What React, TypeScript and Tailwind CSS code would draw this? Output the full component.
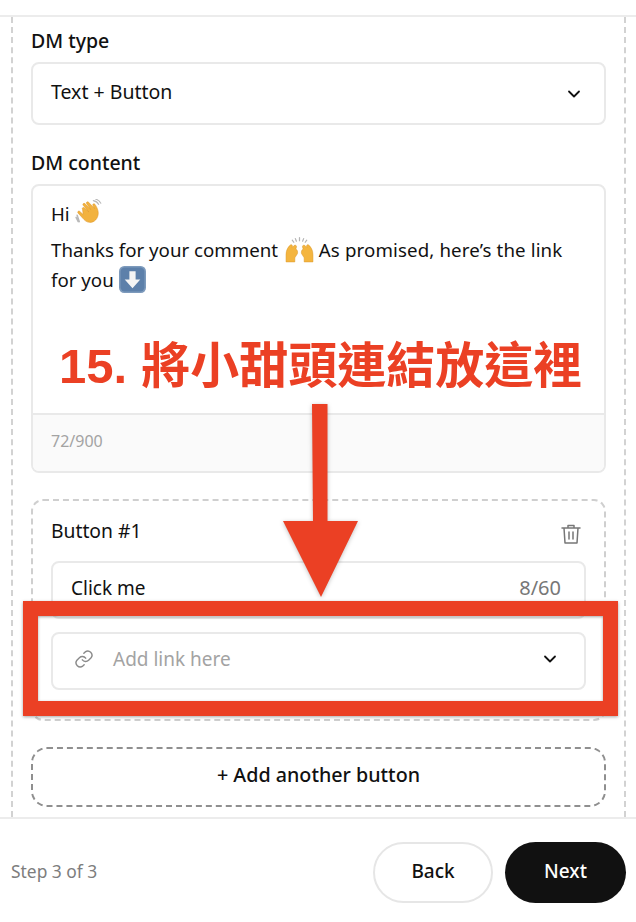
const Wave = () => (
  <svg viewBox="0 0 26 26" className="inline-block w-[28px] h-[28px] align-[-6px]">
    <path d="M2 15 4 21M1 17l2 4" stroke="#b9b9b9" strokeWidth="1.4" fill="none" strokeLinecap="round" />
    <path d="M17 1.5c2 .3 4 1.6 5 3.5M19 0c2 .5 4 1.8 5 4" stroke="#b9b9b9" strokeWidth="1" fill="none" strokeLinecap="round" />
    <path d="M7 9.500c-.8-1 .6-2.200 1.600-1.300l4.200 3.800L7.600 5.800c-.9-1.100.7-2.400 1.700-1.400l5.300 5.200-3.800-5.300c-.8-1.200.8-2.300 1.800-1.300l5.500 5.800-1.500-2.900c-.5-1.300 1.100-2 2-.9 1.500 2.200 3.100 5.200 3 8.200-.1 4.800-3.600 9-8.300 8.500-2.800-.3-4.500-2-6.200-4l-4.300-4.700c-.9-1.100.6-2.400 1.600-1.500l3.200 2.900z" fill="#f2b23e" stroke="#dd9526" strokeWidth=".5" />
  </svg>
);
const Hands = () => (
  <svg viewBox="0 0 28 26" className="inline-block w-[29px] h-[27px] align-[-6px] ml-[2px]">
    <path d="M10 2.500 11 5M14 1.500V4.500M18 2.500 17 5M7 4l1.500 2M21 4l-1.500 2" stroke="#b5b5b5" strokeWidth="1.200" strokeLinecap="round" />
    <path d="M1 25V18C1 14 3 10 5.500 8.500 7 8 7.500 9.500 7 11L9 9c1.500-.5 2.500.5 2 2l-.5 1.500C12 13.500 12.500 15 12 17L9.500 21V25z" fill="#f4b53f" stroke="#dc9a2c" strokeWidth=".5" />
    <path d="M27 25V18C27 14 25 10 22.500 8.500 21 8 20.500 9.500 21 11L19 9c-1.500-.5-2.500.5-2 2l.5 1.500C16 13.500 15.500 15 16 17L18.500 21V25z" fill="#f4b53f" stroke="#dc9a2c" strokeWidth=".5" />
  </svg>
);
const DownBox = () => (
  <svg viewBox="0 0 26 26" className="inline-block w-[27px] h-[27px] align-[-6px]">
    <rect x="0" y="0" width="26" height="26" rx="5" fill="#7d9abc" />
    <rect x="1.500" y="1.500" width="23" height="23" rx="4" fill="#5d80aa" />
    <path d="M10 5h6v8h4.500L13 21.500 5.500 13H10z" fill="#f4f4f4" />
  </svg>
);
const Chevron = () => (
  <svg viewBox="0 0 14 14" className="w-[14px] h-[14px] shrink-0" fill="none" stroke="#111" strokeWidth="1.800" strokeLinecap="round" strokeLinejoin="round">
    <path d="M2 4.500 7 9.500l5-5" />
  </svg>
);

export default function App() {
  return (
    <div className="relative w-[636px] h-[922px] overflow-hidden bg-white flex flex-col text-[#111] font-['Noto_Sans','Open_Sans',sans-serif]">
      <div className="h-[17px] shrink-0 border-b-2 border-[#ececec]" />
      <div className="ml-[11px] w-[615px] h-[800px] shrink-0 border-x-2 border-dashed border-[#d2d2d2] pl-[18px] pr-[18px] pt-[11px] overflow-hidden">
        <div className="text-[19.500px] leading-[26px] font-medium">DM type</div>
        <div className="mt-[8px] h-[63px] rounded-lg border-2 border-[#e9e9e9] flex items-center justify-between pl-[18px] pr-[23px] text-[19.500px]">
          <span className="mb-[3px]">Text + Button</span>
          <Chevron />
        </div>
        <div className="mt-[25px] text-[19.500px] leading-[26px] font-medium">DM content</div>
        <div className="mt-[8px] h-[289px] rounded-lg border-2 border-[#e9e9e9] flex flex-col overflow-hidden">
          <div className="h-[229px] shrink-0 pl-[18px] pr-[18px] pt-[13px] text-[18.700px] leading-[30px] border-b-2 border-[#e9e9e9]">
            <div className="mb-[6px]">Hi <Wave /></div>
            <div>Thanks for your comment <Hands /> <span className="tracking-[0.12px]">As promised, here’s the link</span> for you <DownBox /></div>
          </div>
          <div className="flex-1 bg-[#fafafa] pl-[18px] pt-[13px] text-[16px] leading-[26px] text-[#a3a3a3]">72/900</div>
        </div>
        <div className="mt-[26px] h-[222px] rounded-xl border-2 border-dashed border-[#cfcfcf] px-[18px]">
          <div className="h-[60px] flex items-center justify-between pr-[3px]">
            <span className="text-[19.300px]">Button #1</span>
            <svg viewBox="0 0 24 24" className="w-[24px] h-[24px] mt-[5px]" fill="none" stroke="#777" strokeWidth="1.500" strokeLinecap="round" strokeLinejoin="round">
              <path d="M3 6h18M9 6V3.500h6V6M5 6l1 15h12l1-15M10 10v7M14 10v7" />
            </svg>
          </div>
          <div className="h-[58px] rounded-lg border-2 border-[#e9e9e9] flex items-center justify-between pb-[4px] pl-[18px] pr-[23px] text-[19px]">
            <span>Click me</span>
            <span className="text-[#777] text-[20px]">8/60</span>
          </div>
          <div className="mt-[13px] h-[58px] rounded-lg border-2 border-[#e9e9e9] flex items-center pb-[4px] pl-[21px] pr-[27px] text-[19px]">
            <svg viewBox="0 0 24 24" className="w-[20px] h-[20px] shrink-0" fill="none" stroke="#8a8a8a" strokeWidth="1.700" strokeLinecap="round" strokeLinejoin="round">
              <path d="M10 13a5 5 0 0 0 7.500.5l3-3a5 5 0 0 0-7-7l-1.700 1.700" />
              <path d="M14 11a5 5 0 0 0-7.500-.5l-3 3a5 5 0 0 0 7 7l1.700-1.700" />
            </svg>
            <span className="ml-[19px] flex-1 text-[#a3a3a3]">Add link here</span>
            <Chevron />
          </div>
        </div>
        <div className="mt-[26px] h-[60px] rounded-2xl border-2 border-dashed border-[#8f8f8f] flex items-center justify-center pb-[5px] text-[19.700px] font-medium">
          + Add another button
        </div>
      </div>
      <div className="flex-1 border-t-2 border-[#ececec] flex items-start justify-between pl-[11px] pr-[10px] pt-[23px]">
        <span className="mt-[17px] text-[17.400px] leading-[24px] text-[#7d7d7d]">Step 3 of 3</span>
        <div className="flex gap-[12px]">
          <div className="w-[120px] h-[61px] rounded-full border-2 border-[#e6e6e6] flex items-center justify-center pb-[3px] text-[19px] font-medium">Back</div>
          <div className="w-[121px] h-[61px] rounded-full bg-[#111] text-white flex items-center justify-center pb-[3px] text-[19px] font-medium">Next</div>
        </div>
      </div>

      <div className="absolute left-[59px] top-[329px] whitespace-nowrap font-bold leading-[66px] text-[#eb4024] text-[49px]">
        <span className="font-['Liberation_Sans',sans-serif]">15.</span>
        <span className="ml-[14px] font-['Noto_Sans_CJK_TC',sans-serif] text-[49px]">將小甜頭連結放這裡</span>
      </div>
      <svg className="absolute left-[280px] top-[400px] w-[82px] h-[200px] drop-shadow-[0_1px_2px_rgba(0,0,0,0.25)]" viewBox="0 0 82 200">
        <path d="M32 4H47.500V121H78L41 197 3 121H33z" fill="#eb4024" />
      </svg>
      <div className="absolute left-[23px] top-[601px] w-[595px] h-[115px] border-[15px] border-[#eb4024] shadow-[0_1px_3px_rgba(0,0,0,0.35),inset_0_1px_3px_rgba(0,0,0,0.35)]" />
    </div>
  );
}
